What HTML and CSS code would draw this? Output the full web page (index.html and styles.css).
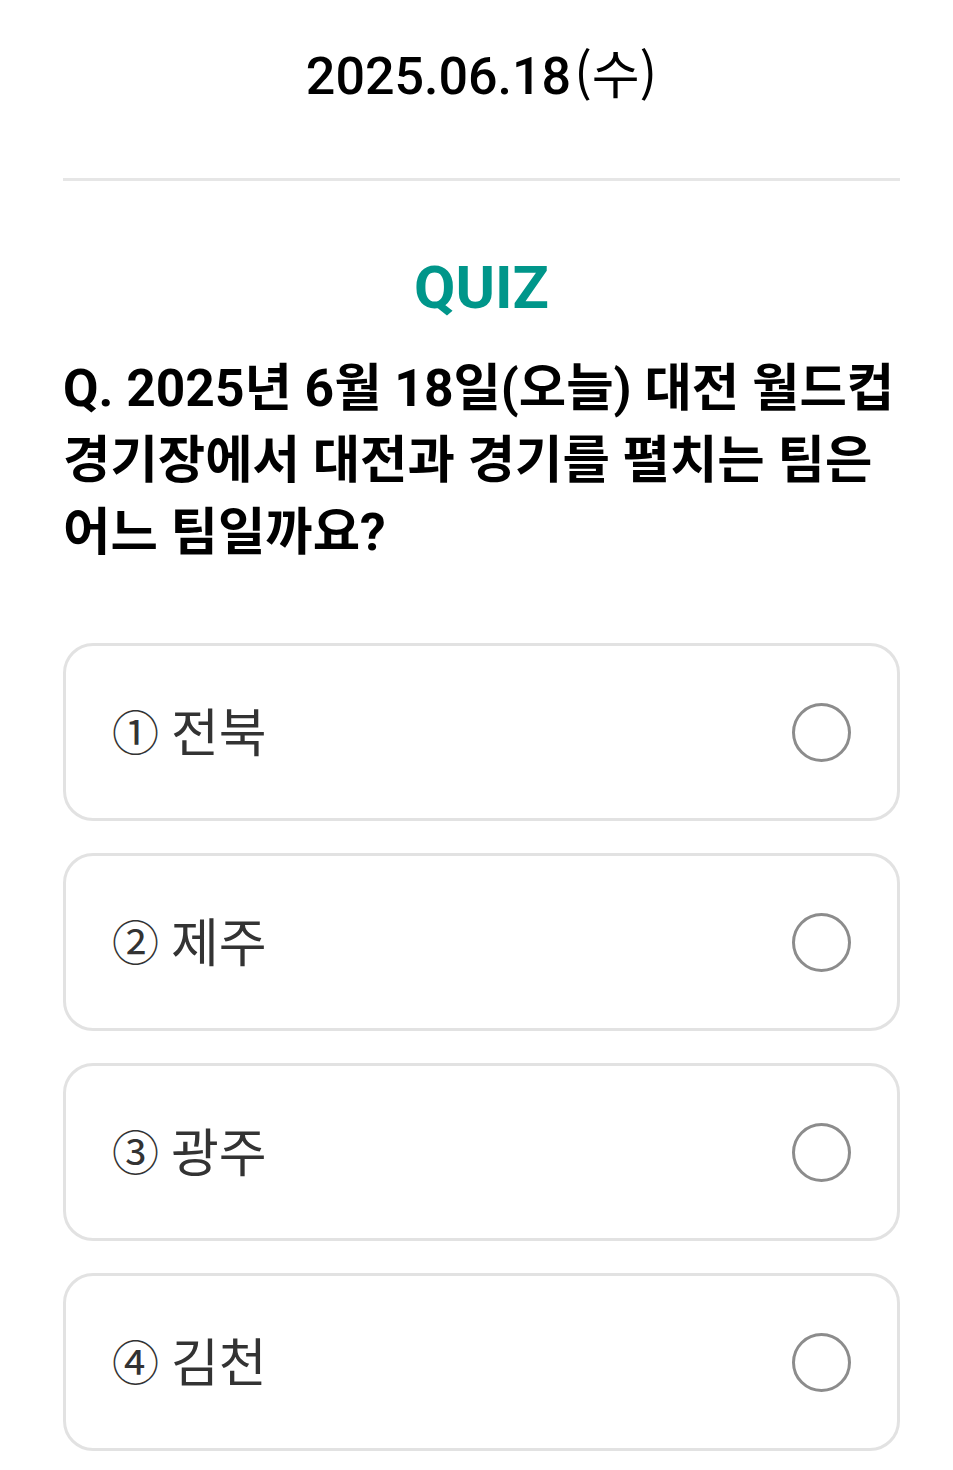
FILE: index.html
```html
<!DOCTYPE html>
<html lang="ko">
<head>
  <meta charset="UTF-8" />
  <meta name="viewport" content="width=device-width, initial-scale=1.0" />
  <title>오늘의 퀴즈</title>
  <link rel="stylesheet" href="styles.css">
</head>
<body>
  <div class="page">
    <div class="date">2025.06.18<span class="day">(수)</span></div>
    <hr class="divider" />

    <h1 class="title">QUIZ</h1>
    <p class="question">Q. 2025년 6월 18일(오늘) 대전 월드컵 경기장에서 대전과 경기를 펼치는 팀은 어느 팀일까요?</p>

    <ul class="options">
      <li class="option"><span class="label"><span class="num">①</span>전북</span><span class="radio"></span></li>
      <li class="option"><span class="label"><span class="num">②</span>제주</span><span class="radio"></span></li>
      <li class="option"><span class="label"><span class="num">③</span>광주</span><span class="radio"></span></li>
      <li class="option"><span class="label"><span class="num">④</span>김천</span><span class="radio"></span></li>
    </ul>
  </div>
</body>
</html>
```

FILE: styles.css
```css
body { margin: 0; background: #fff; font-family: Roboto, "Noto Sans CJK KR", sans-serif; color: #000; }
.page { padding: 0 53px 0 63px; }
.date { text-align: center; font-size: 52px; font-weight: 500; line-height: 60px; padding-top: 42px; }
.date .day { font-family: "Noto Sans CJK KR", sans-serif; font-weight: 400; margin-left: 3px; }
.divider { border: 0; height: 3px; background: #e6e6e6; margin: 71px 0 0; }
.title { text-align: center; color: #00968a; font-size: 60px; font-weight: 700; line-height: 70px; margin: 72px 0 0; }
.question { font-size: 51.5px; font-weight: 700; line-height: 72px; margin: 30px 0 0; word-break: keep-all; }
.options { list-style: none; margin: 74px 0 0; padding: 0; display: flex; flex-direction: column; gap: 32px; }
.option { display: flex; align-items: center; justify-content: space-between; height: 172px; border: 3px solid #e2e2e2; border-radius: 30px; padding: 0 46px 0 46px; }
.label { font-family: "Noto Sans CJK KR", sans-serif; font-size: 52px; color: #333; display: flex; align-items: center; margin-top: -6px; }
.num { font-size: 47px; margin-right: 12px; }
.radio { width: 53px; height: 53px; border: 3px solid #8c8c8c; border-radius: 50%; }
```
